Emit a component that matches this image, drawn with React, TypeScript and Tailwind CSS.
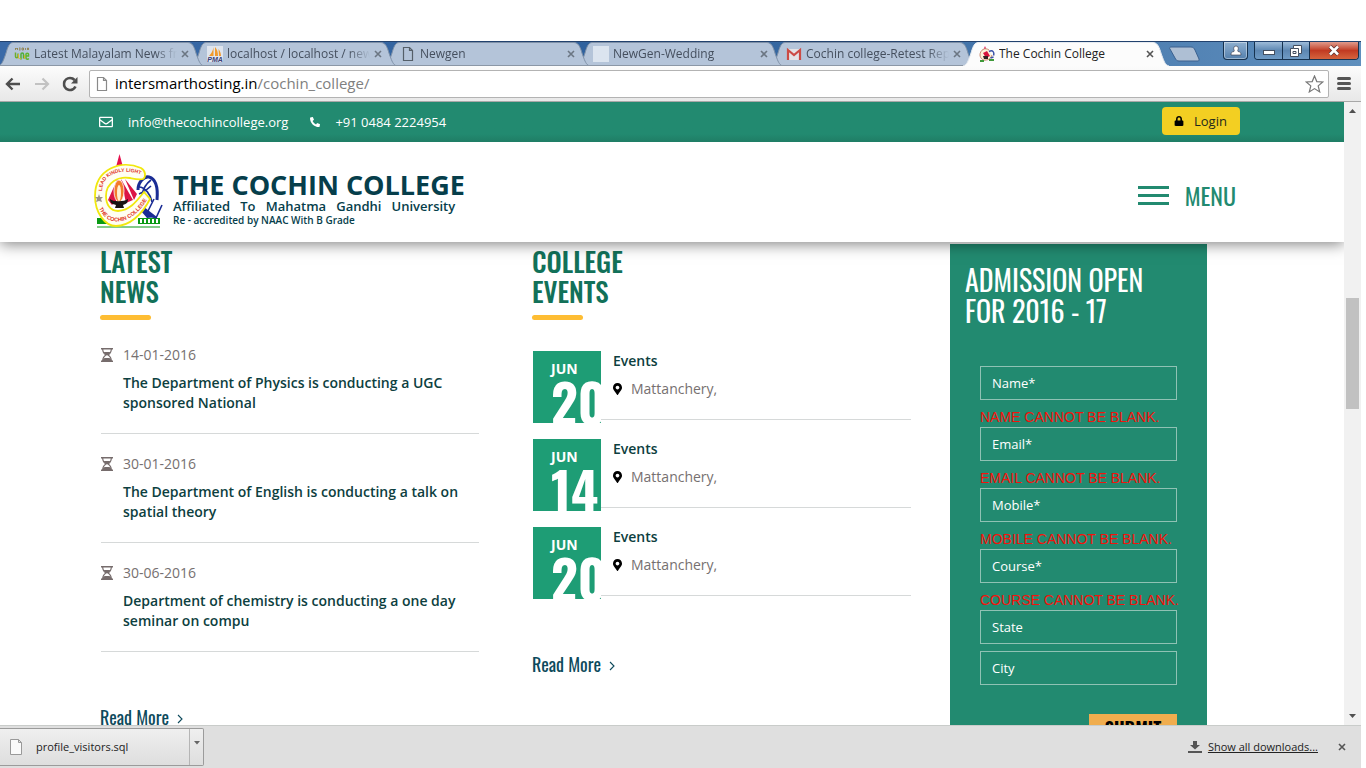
import React from "react";
import { FaRegEnvelope, FaLock, FaMapMarkerAlt, FaPhoneAlt } from "react-icons/fa";

const DISPLAY = "font-['Oswald','Roboto_Condensed','Roboto',sans-serif]";

const news = [
  { date: "14-01-2016", title: "The Department of Physics is conducting a UGC sponsored National" },
  { date: "30-01-2016", title: "The Department of English is conducting a talk on spatial theory" },
  { date: "30-06-2016", title: "Department of chemistry is conducting a one day seminar on compu" },
];

const events = [
  { month: "JUN", day: "20", title: "Events", place: "Mattanchery," },
  { month: "JUN", day: "14", title: "Events", place: "Mattanchery," },
  { month: "JUN", day: "20", title: "Events", place: "Mattanchery," },
];

const fields = [
  { id: "name", label: "Name*", error: "NAME CANNOT BE BLANK." },
  { id: "email", label: "Email*", error: "EMAIL CANNOT BE BLANK." },
  { id: "mobile", label: "Mobile*", error: "MOBILE CANNOT BE BLANK." },
  { id: "course", label: "Course*", error: "COURSE CANNOT BE BLANK." },
  { id: "state", label: "State", error: "" },
  { id: "city", label: "City", error: "" },
];

function MediaOneIcon() {
  return (
    <svg width="16" height="16" viewBox="0 0 16 16" fill="none">
      <path d="M1.500 4V2l1 1 1-1v2M5 2h1.500M5 3h1.500M5 4h1.500M8 2v2h1.500V2zM11.500 2v2M13.500 4V2h1v2" stroke="#8a7a3c" strokeWidth=".8" />
      <path d="M1.500 6.500v4c0 1.500 2.500 1.500 2.500 0v-3" stroke="#6cae2c" strokeWidth="1.500" />
      <path d="M7 13.500V8c0-1.500 2.500-1.500 2.500 0v4.500" stroke="#4fae3a" strokeWidth="1.500" />
      <path d="M12 10h2.500V8c0-1-2.500-1-2.500 0v4c0 1.500 2 1.500 2.800.5" stroke="#5db52c" strokeWidth="1.500" />
      <path d="M4.500 8v4.500M5.500 12c.5 1.500 1 1.500 1.500 0M10.500 9v4" stroke="#d8b332" strokeWidth="1" />
    </svg>
  );
}

function PmaIcon() {
  return (
    <svg width="16" height="16" viewBox="0 0 16 16">
      <rect width="16" height="16" fill="#dfe5ee" />
      <path d="M6.500 1v9H2c2-2 4-5 4.500-9zM8 1c2 2 3 5 3 9H8zM11.500 3c1.500 2 2.500 4 2.500 7h-2z" fill="#f09a2c" />
      <text x="8" y="16" textAnchor="middle" fontSize="7" fontWeight="700" fontStyle="italic" fontFamily="Liberation Sans" fill="#3a3f77">PMA</text>
    </svg>
  );
}

function PageIcon({ color, fill }: { color: string; fill: string }) {
  return (
    <svg width="16" height="16" viewBox="0 0 16 16">
      <path d="M3.500 1.500h6l3 3v10h-9zM9.500 1.500v3h3" fill={fill} stroke={color} strokeWidth="1.200" />
    </svg>
  );
}

function BlankIcon() {
  return <span className="block size-4 bg-[#dbe4ef]" />;
}

function GmailIcon() {
  return (
    <svg width="16" height="16" viewBox="0 0 16 16">
      <path d="M1 3h14v11H1z" fill="#e4e3e6" />
      <path d="M2 14V4l6 5 6-5v10" fill="none" stroke="#cc4b45" strokeWidth="2.200" />
    </svg>
  );
}

function CollegeIcon() {
  return (
    <svg width="16" height="16" viewBox="0 0 16 16">
      <path d="M6 0l1.200 3H4.800z" fill="#e0104f" />
      <path d="M10 4C6 1 1 4 1 9c0 3 3 6 6 5 3 0 5-2 6-5" fill="#fdf3da" stroke="#c98a72" strokeWidth="1" />
      <path d="M4 7l4-2 3 5-4 2z" fill="#d8153e" />
      <path d="M4 10h5v3H5z" fill="#332222" />
      <path d="M10 5.500c4-2 5.500 1 4.500 4M14.500 11l-3 1" fill="none" stroke="#3b53a8" strokeWidth="1.500" />
      <path d="M1 15h4M10 14h5" stroke="#3f9a3a" strokeWidth="2" />
    </svg>
  );
}

const tabs = [
  { title: "Latest Malayalam News from", icon: <MediaOneIcon /> },
  { title: "localhost / localhost / newgen", icon: <PmaIcon /> },
  { title: "Newgen", icon: <PageIcon color="#555f69" fill="none" /> },
  { title: "NewGen-Wedding", icon: <BlankIcon /> },
  { title: "Cochin college-Retest Report", icon: <GmailIcon /> },
  { title: "The Cochin College", icon: <CollegeIcon />, active: true },
];

const layers = ["z-[6]", "z-[5]", "z-[4]", "z-[3]", "z-[2]", "z-[7]"];

function CloseX({ color }: { color: string }) {
  return (
    <svg width="8" height="8" viewBox="0 0 8 8">
      <path d="M1 1l6 6M7 1L1 7" stroke={color} strokeWidth="1.600" />
    </svg>
  );
}

function TabStrip() {
  return (
    <div className="flex h-[25px] items-end overflow-hidden border-t border-[#22426e] bg-linear-to-r from-[#3a6aa8] via-[#2f619c] to-[#5f8fbd]">
      <div className="-ml-0.5 flex">
        {tabs.map((t, i) => (
          <div key={t.title} className={`relative -mr-[13px] flex h-6 w-[206px] shrink-0 items-center gap-1 pl-4 pr-[15px] ${layers[i]}`}>
            <svg className="absolute inset-0 size-full" viewBox="0 0 206 24" preserveAspectRatio="none">
              <path
                d="M0 24C4 23 5 19 7 14S10 .5 15 .5H190C196 .5 197 9 199 14S202 23 206 24"
                fill={t.active ? "#fcfcfc" : "#b4c4d9"}
                stroke={t.active ? "#e6ebf1" : "#7f91a8"}
              />
              {!t.active && <path d="M0 23.500H206" stroke="#8b97a6" />}
            </svg>
            <span className="relative">{t.icon}</span>
            <button
              className={`relative h-5 min-w-0 flex-1 overflow-hidden whitespace-nowrap text-left text-[12px] leading-5 ${
                t.active ? "text-[#222]" : "mask-r-from-85% text-[#454f5e]"
              }`}
            >
              {t.title}
            </button>
            <button aria-label={`Close ${t.title}`} className="relative">
              <CloseX color={t.active ? "#555" : "#6b7683"} />
            </button>
          </div>
        ))}
      </div>
      <button aria-label="New tab" className="mb-1 ml-3 flex">
        <svg width="32" height="16" viewBox="0 0 32 16">
          <path d="M3 1h20c2 0 3 1 4 3l4 9c0 1 0 2-1 2H11c-2 0-3-1-4-3L2 3c-1-1 0-2 1-2z" fill="#aebfd4" stroke="#3c618f" />
        </svg>
      </button>
      <div className="ml-auto flex h-full items-start gap-[6px] pr-[2px]">
        <button aria-label="Profile" className="flex h-[18px] w-[25px] items-center justify-center rounded-b border border-t-0 border-[#16324f] bg-linear-to-b from-[#8fb0d0] to-[#5480ad] ring-1 ring-white/40 ring-inset">
          <svg width="12" height="12" viewBox="0 0 12 12">
            <path d="M6 1a2.300 2.300 0 012.300 2.300C8.300 5 7.200 5.500 8 6.500c2.300.3 3 1.300 3 3.500H1c0-2.200.7-3.200 3-3.500.8-1-.3-1.500-.3-3.200A2.300 2.300 0 016 1z" fill="#fff" stroke="#334" strokeWidth=".6" />
          </svg>
        </button>
        <div className="flex h-[18px] overflow-hidden rounded-b border border-t-0 border-[#16324f]">
          <button aria-label="Minimize" className="flex w-[28px] items-center justify-center border-r border-[#16324f] bg-linear-to-b from-[#9dbbd9] via-[#5d87b2] to-[#6f9bc5] pt-1">
            <svg width="12" height="5" viewBox="0 0 12 5"><rect x=".5" y=".5" width="11" height="4" fill="#fff" stroke="#444f60" /></svg>
          </button>
          <button aria-label="Restore" className="flex w-[27px] items-center justify-center border-r border-[#16324f] bg-linear-to-b from-[#9dbbd9] via-[#5d87b2] to-[#6f9bc5]">
            <svg width="12" height="12" viewBox="0 0 12 12">
              <path d="M3.500.5h8v8h-3v3h-8v-8h3z" fill="#fff" stroke="#444f60" />
              <path d="M3.500 3.500h5v5M3 6.500h3v2H3z" fill="none" stroke="#444f60" />
            </svg>
          </button>
          <button aria-label="Close window" className="flex w-[48px] items-center justify-center bg-linear-to-b from-[#df9a8c] via-[#c13a22] to-[#d5633d]">
            <svg width="12" height="11" viewBox="0 0 12 11">
              <path d="M2 1.500l8 8M10 1.500l-8 8" stroke="#5a3030" strokeWidth="4" />
              <path d="M2 1.500l8 8M10 1.500l-8 8" stroke="#fff" strokeWidth="2.600" />
            </svg>
          </button>
        </div>
      </div>
    </div>
  );
}

function Toolbar() {
  return (
    <div className="flex h-9 items-center border-b border-[#a8a8a8] bg-linear-to-b from-[#fcfcfc] to-[#e8e8e8] pl-1 pr-[10px]">
      <button aria-label="Back" className="w-[30px]">
        <svg width="17" height="14" viewBox="0 0 17 14" fill="none" stroke="#4e4e4e" strokeWidth="2.400"><path d="M16 7H3M8.500 1.500L3 7l5.500 5.500" /></svg>
      </button>
      <button aria-label="Forward" className="w-[28px]">
        <svg width="17" height="14" viewBox="0 0 17 14" fill="none" stroke="#c2c2c2" strokeWidth="2.200"><path d="M1 7h13M8.500 1.500L14 7l-5.500 5.500" /></svg>
      </button>
      <button aria-label="Reload" className="w-[27px]">
        <svg width="17" height="16" viewBox="0 0 17 16">
          <path d="M13.500 10.500A6 6 0 118 2c2 0 3.500.8 4.600 2" fill="none" stroke="#4e4e4e" strokeWidth="2.600" />
          <path d="M15.500 1v6.500H9z" fill="#4e4e4e" />
        </svg>
      </button>
      <div className="relative flex h-7 flex-1 items-center rounded-xs border border-[#b3b3b3] bg-white pl-1 pr-1">
        <PageIcon color="#8a8a8a" fill="#fff" />
        <div aria-hidden="true" className="pointer-events-none ml-[5px] flex-1 pb-0.5 text-[15px] leading-6 text-[#808080]">
          <span className="text-black">intersmarthosting.in</span>/cochin_college/
        </div>
        <input aria-label="Address" className="absolute inset-0 w-full bg-transparent outline-none" />
        <button aria-label="Bookmark" className="relative">
          <svg width="19" height="18" viewBox="0 0 19 18">
            <path d="M9.500 1l2.300 5.600 6 .4-4.600 3.900 1.500 6-5.200-3.300-5.200 3.300 1.500-6L1.200 7l6-.4z" fill="#fff" stroke="#777" strokeWidth="1.200" />
          </svg>
        </button>
      </div>
      <button aria-label="Menu" className="ml-2 flex w-[14px] flex-col gap-[2px]">
        <span className="h-[3px] rounded-xs bg-[#555]" />
        <span className="h-[3px] rounded-xs bg-[#555]" />
        <span className="h-[3px] rounded-xs bg-[#555]" />
      </button>
    </div>
  );
}

function CollegeLogo() {
  return (
    <svg width="70" height="76" viewBox="0 0 70 76" aria-hidden="true">
      <path d="M3 64H34V70H3z" fill="#0a9a14" />
      <path d="M44 64H66V70H44z" fill="#0a9a14" />
      <path d="M3 73H66" stroke="#0a9a14" strokeWidth="1.200" />
      <path d="M47 65v4M51 65v4M55 65v4M59 65v4M63 65v4" stroke="#fff" strokeWidth="2" />
      <path d="M25.500 0L29 13H22z" fill="#e5104c" />
      <g fill="none" stroke="#1a2c94">
        <path d="M44 36c0-8 6-14 11-13 7 2 9 12 8 23" strokeWidth="3" />
        <path d="M45 33c6 0 12 8 13 15M57 26c-4 3-8 9-9 15M45 40c5-2 9-5 12-8" strokeWidth="1.600" />
        <path d="M52 61l8-16M68 51l-6 13-8-3" strokeWidth="1.600" />
      </g>
      <path d="M50 53l13 10-10 1-6-7z" fill="#1a2c94" />
      <path
        d="M47 14C27 5 1 15 1 42c0 17 10 30 21 30 13 0 26-11 34-27l-6-7C42 48 36 56 24 57 16 57 12 50 12 42c0-14 13-20 24-18 5 1 9 2 13 1 3-2 3-8-2-11z"
        fill="#fffef2"
        stroke="#f1e80e"
        strokeWidth="1.800"
      />
      <path d="M23 26L14 46l4 5 4-4 3-21zM27 25l5 24 7-3zM31 25l12 15-3 6z" fill="#dc1545" />
      <ellipse cx="25" cy="37" rx="5" ry="11" fill="#f37b2c" stroke="#fff" strokeWidth=".8" />
      <ellipse cx="25" cy="39" rx="2" ry="8" fill="#fff0d0" />
      <path d="M16 45c3 3 14 3 18 0 0 4-2 5-5 6l1 3h-9l1-3c-4-1-6-2-6-6z" fill="#171313" />
      <path d="M5 40l1 3h3l-2 2 1 3-3-1-3 1 1-3-2-2h3z" fill="#9a9289" />
      <defs>
        <path id="motto" d="M8 37C8 20 28 13 48 21" />
        <path id="ring" d="M5 54C14 76 40 70 54 44" />
      </defs>
      <g fontFamily="Liberation Sans" fontWeight="700" fill="#e0321c">
        <text fontSize="5"><textPath href="#motto">LEAD KINDLY LIGHT</textPath></text>
        <text fontSize="5.500"><textPath href="#ring">THE COCHIN COLLEGE</textPath></text>
      </g>
    </svg>
  );
}

function SiteHeader() {
  return (
    <header className="relative z-10 shrink-0 bg-white shadow-[0_2px_14px_rgba(0,0,0,0.5)]">
      <div className="flex h-10 items-center bg-linear-to-b from-[#228a70] from-80% to-[#1f7d65] pl-[99px] pr-[104px] text-[13px] leading-5 text-white">
        <FaRegEnvelope className="size-[14px]" />
        <a href="mailto:info@thecochincollege.org" className="ml-[15px]">info@thecochincollege.org</a>
        <FaPhoneAlt className="ml-[22px] size-[10px]" />
        <a href="tel:+9104842224954" className="ml-[15px]">+91 0484 2224954</a>
        <button className="mb-0.5 ml-auto flex h-7 w-[78px] items-center gap-[10px] rounded-sm bg-[#f3cf22] pl-3 text-[#1e2a1c]">
          <FaLock className="size-[10px] text-black" />
          Login
        </button>
      </div>
      <div className="flex h-[100px] items-center pl-[94px] pr-[108px]">
        <CollegeLogo />
        <div className="ml-[9px] pt-[14px] text-[#063e4b]">
          <div className="text-[27px] font-bold leading-7">THE COCHIN COLLEGE</div>
          <div className="whitespace-pre text-[13px] font-semibold leading-[14px]">{"Affiliated   To   Mahatma   Gandhi   University"}</div>
          <div className="text-[10px] font-semibold leading-[14px]">Re - accredited by NAAC With B Grade</div>
        </div>
        <button className="ml-auto flex items-center gap-4 pt-1.5 text-[#228a70]">
          <span className="flex w-[31px] flex-col gap-[5px]">
            <span className="h-[3px] bg-[#228a70]" />
            <span className="h-[3px] bg-[#228a70]" />
            <span className="h-[3px] bg-[#228a70]" />
          </span>
          <span className={`text-[24px] leading-7 ${DISPLAY}`}>MENU</span>
        </button>
      </div>
    </header>
  );
}

function Heading({ top, bottom }: { top: string; bottom: string }) {
  return (
    <>
      <h2 className={`text-[27px] font-medium leading-[30px] text-[#127159] ${DISPLAY}`}>
        {top}
        <br />
        {bottom}
      </h2>
      <div className="mt-[9px] h-[5px] w-[51px] rounded-full bg-[#febd33]" />
    </>
  );
}

function ReadMore() {
  return (
    <a href="#more" className={`mt-[53px] flex items-center gap-2 text-[18px] leading-6 text-[#0d4a5c] ${DISPLAY}`}>
      Read More
      <svg width="6" height="10" viewBox="0 0 6 10" className="mt-1"><path d="M1 1l4 4-4 4" fill="none" stroke="#0d4a5c" strokeWidth="1.100" /></svg>
    </a>
  );
}

function Hourglass() {
  return (
    <svg width="12" height="14" viewBox="0 0 12 14">
      <path d="M0 .7h12M0 13.300h12" stroke="#766c6c" strokeWidth="1.400" />
      <path d="M1.700 1c0 3 1 4.500 3.300 6-2.300 1.500-3.300 3-3.300 6M10.300 1c0 3-1 4.500-3.300 6 2.300 1.500 3.300 3 3.300 6" fill="none" stroke="#766c6c" strokeWidth="1.200" />
      <path d="M2.500 4h7L7 7H5zM1.500 13c.5-2 1-3 2.500-3h4c1.500 0 2 1 2.500 3z" fill="#766c6c" />
    </svg>
  );
}

function News() {
  return (
    <section>
      <Heading top="LATEST" bottom="NEWS" />
      <ul className="mt-[5px] ml-px">
        {news.map((n) => (
          <li key={n.date} className="flex gap-[10px] border-b border-[#d6d9d9] py-5 leading-5">
            <span className="mt-[3px] w-3 shrink-0"><Hourglass /></span>
            <div>
              <div className="text-[14px] text-[#767070]">{n.date}</div>
              <a href="#news" className="mt-2 block text-[14px] font-semibold text-[#0d4040]">{n.title}</a>
            </div>
          </li>
        ))}
      </ul>
      <ReadMore />
    </section>
  );
}

function Events() {
  return (
    <section>
      <Heading top="COLLEGE" bottom="EVENTS" />
      <ul className="mt-[31px] ml-px flex flex-col gap-4">
        {events.map((e, i) => (
          <li key={i} className="flex h-[72px] items-start">
            <div className="h-[72px] w-[68px] shrink-0 overflow-hidden bg-[#1e9d75] pl-[18px] pt-2 text-white">
              <div className="text-[14px] font-bold leading-5">{e.month}</div>
              <div className={`text-[52px] font-bold leading-[46px] ${DISPLAY}`}>{e.day}</div>
            </div>
            <div className="h-[69px] flex-1 border-b border-[#d6d9d9] pl-3 text-[14px] leading-5">
              <div className="font-semibold text-[#0d4040]">{e.title}</div>
              <div className="mt-2 flex items-center gap-[9px] text-[#767070]">
                <FaMapMarkerAlt className="h-3 w-[9px] text-black" />
                {e.place}
              </div>
            </div>
          </li>
        ))}
      </ul>
      <ReadMore />
    </section>
  );
}

function Admission() {
  return (
    <form className="-mt-0.5 ml-[39px] w-[257px] shrink-0 bg-[#228a70] px-[15px] pt-5" onSubmit={(e) => e.preventDefault()}>
      <h2 className={`whitespace-nowrap text-[28px] leading-[31px] text-white ${DISPLAY}`}>
        ADMISSION OPEN
        <br />
        FOR 2016 - 17
      </h2>
      <div className="mt-10 px-[15px]">
        {fields.map((f) => (
          <div key={f.id}>
            <input
              id={f.id}
              aria-label={f.label}
              placeholder={f.label}
              className="mb-[7px] block h-[34px] w-full border border-[#8fc2b4] bg-transparent px-[11px] text-[13px] font-medium text-white outline-none placeholder:text-white placeholder:opacity-100"
            />
            {f.error && (
              <p className="h-5 whitespace-nowrap font-['Liberation_Sans',sans-serif] text-[14px] leading-5 text-[#f5120c]">{f.error}</p>
            )}
          </div>
        ))}
        <button className={`mt-[29px] ml-auto block h-9 w-[88px] bg-[#f0ad4e] pb-2 text-[18px] font-bold leading-7 text-black ${DISPLAY}`}>SUBMIT</button>
      </div>
    </form>
  );
}

function Scrollbar() {
  return (
    <div className="flex w-[17px] shrink-0 flex-col items-center justify-between bg-[#f1f1f1] py-[7px]">
      <svg width="7" height="4" viewBox="0 0 7 4"><path d="M0 4l3.500-4L7 4z" fill="#505050" /></svg>
      <div className="mb-[120px] h-[111px] w-[13px] bg-[#c1c1c1]" />
      <svg width="7" height="4" viewBox="0 0 7 4"><path d="M0 0l3.500 4L7 0z" fill="#505050" /></svg>
    </div>
  );
}

function DownloadBar() {
  return (
    <footer className="flex h-[43px] shrink-0 items-center border-t border-[#c9ccca] bg-[#dfdfdf] pr-[15px] text-[11px] text-[#222]">
      <div className="flex h-[38px] w-[204px] rounded-r-xs border border-l-0 border-[#9b9b9b] bg-linear-to-b from-[#efefef] to-[#dedede]">
        <button className="flex flex-1 items-center gap-3 pl-2">
          <svg width="16" height="18" viewBox="0 0 16 18"><path d="M2.500 1.500h8l3 3v12h-11zM10.500 1.500v3h3" fill="#fafafa" stroke="#999" /></svg>
          profile_visitors.sql
        </button>
        <button aria-label="Download options" className="flex w-[14px] justify-center border-l border-[#b5b5b5] pt-3">
          <svg width="6" height="4" viewBox="0 0 6 4"><path d="M0 0h6L3 3.500z" fill="#666" /></svg>
        </button>
      </div>
      <svg className="ml-auto" width="14" height="14" viewBox="0 0 14 14"><path d="M5 1h4v4h3L7 9.500 2 5h3zM0 11h14v2H0z" fill="#555" /></svg>
      <a href="#downloads" className="ml-1.5 underline">Show all downloads...</a>
      <button aria-label="Close downloads bar" className="ml-5"><CloseX color="#555" /></button>
    </footer>
  );
}

export default function App() {
  return (
    <div className="flex h-screen flex-col overflow-hidden bg-white pt-[41px] pr-[5px] font-['Open_Sans',sans-serif]">
      <TabStrip />
      <Toolbar />
      <div className="flex min-h-0 flex-1">
        <div className="flex min-w-0 flex-1 flex-col overflow-hidden">
          <SiteHeader />
          <main className="flex flex-1 pl-[100px] pr-[137px] pt-1">
            <div className="grid flex-1 grid-cols-2 gap-x-[53px]">
              <News />
              <Events />
            </div>
            <Admission />
          </main>
        </div>
        <Scrollbar />
      </div>
      <DownloadBar />
    </div>
  );
}
